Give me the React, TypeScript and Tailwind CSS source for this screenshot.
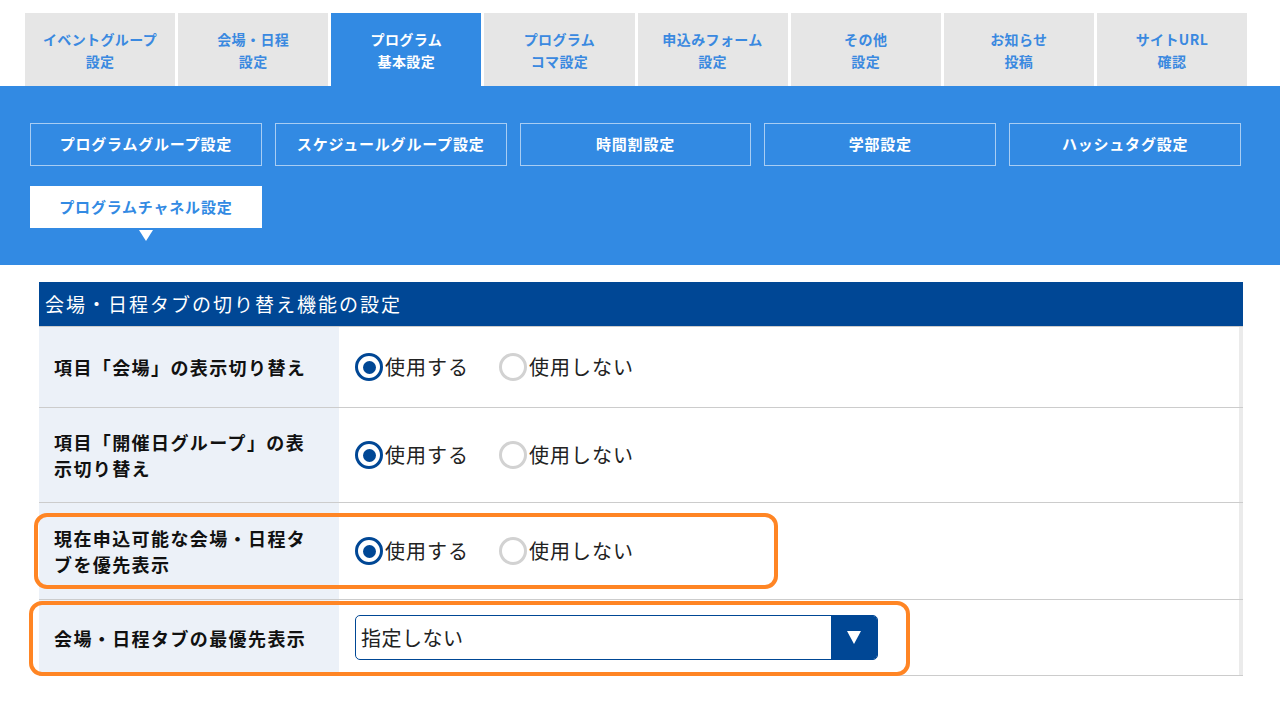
import React from 'react';

const tabs = [
  ['イベントグループ', '設定'],
  ['会場・日程', '設定'],
  ['プログラム', '基本設定'],
  ['プログラム', 'コマ設定'],
  ['申込みフォーム', '設定'],
  ['その他', '設定'],
  ['お知らせ', '投稿'],
  ['サイトURL', '確認'],
];

const subMenus = [
  'プログラムグループ設定',
  'スケジュールグループ設定',
  '時間割設定',
  '学部設定',
  'ハッシュタグ設定',
  'プログラムチャネル設定',
];

function Radio({ checked, label }: { checked: boolean; label: string }) {
  return (
    <label className="flex items-center gap-[2px]">
      <span
        className={`flex h-[28px] w-[28px] items-center justify-center rounded-full border-[3px] bg-white ${
          checked ? 'border-[#004795]' : 'border-[#d2d2d2]'
        }`}
      >
        {checked && <span className="h-[13px] w-[13px] rounded-full bg-[#004795]" />}
      </span>
      <span className="text-[20px] tracking-[1px] text-[#222]">{label}</span>
    </label>
  );
}

function RadioPair() {
  return (
    <div className="flex items-center gap-[30px]">
      <Radio checked label="使用する" />
      <Radio checked={false} label="使用しない" />
    </div>
  );
}

function Row({ label, height, children }: { label: React.ReactNode; height: string; children: React.ReactNode }) {
  return (
    <div className={`flex border-b border-[#cccccc] ${height}`}>
      <div className="flex w-[300px] shrink-0 items-center bg-[#ecf1f8] px-[15px] text-[18px] font-bold leading-[26px] tracking-[1.4px] text-[#111]">
        {label}
      </div>
      <div className="flex flex-1 items-center border-r-[4px] border-[#ebebeb] bg-white pl-[16px]">{children}</div>
    </div>
  );
}

export default function App() {
  return (
    <div className="min-h-[720px] w-full bg-white font-['Noto_Sans_CJK_JP','Noto_Sans',sans-serif]">
      {/* top tabs */}
      <div className="grid grid-cols-8 gap-[3px] pl-[25px] pr-[33px] pt-[13px]">
        {tabs.map((t, i) => (
          <div
            key={i}
            className={`flex h-[73px] flex-col items-center justify-center text-center text-[14px] font-bold leading-[22px] tracking-[0.4px] ${
              i === 2 ? 'bg-[#328ae3] text-white' : 'bg-[#e6e6e6] text-[#3a89e0]'
            }`}
          >
            <span>{t[0]}</span>
            <span>{t[1]}</span>
          </div>
        ))}
      </div>

      {/* sub menu band */}
      <div className="bg-[#328ae3] pb-[37px] pl-[30px] pr-[39px] pt-[37px]">
        <div className="grid grid-cols-5 gap-x-[13px] gap-y-[20px]">
          {subMenus.map((m, i) => {
            const active = i === 5;
            return (
              <div
                key={m}
                className={`relative flex items-center justify-center text-[15px] font-bold tracking-[0.8px] ${
                  active ? 'h-[42px] bg-white text-[#328ae3]' : 'h-[43px] border border-[#a8cdf3] text-white'
                }`}
              >
                {m}
                {active && (
                  <span className="absolute left-1/2 top-full mt-[2px] -translate-x-1/2 border-l-[7px] border-r-[7px] border-t-[11px] border-l-transparent border-r-transparent border-t-white" />
                )}
              </div>
            );
          })}
        </div>
      </div>

      {/* settings section */}
      <div className="relative ml-[39px] mt-[17px] w-[1204px]">
        <div className="flex h-[45px] items-center border-b border-[#cccccc] bg-[#004795] pl-[6px] text-[19px] tracking-[2px] text-white">
          会場・日程タブの切り替え機能の設定
        </div>

        <Row label="項目「会場」の表示切り替え" height="h-[81px]">
          <RadioPair />
        </Row>
        <Row
          label={
            <span>
              項目「開催日グループ」の表
              <br />
              示切り替え
            </span>
          }
          height="h-[95px]"
        >
          <RadioPair />
        </Row>
        <Row
          label={
            <span>
              現在申込可能な会場・日程タ
              <br />
              ブを優先表示
            </span>
          }
          height="h-[97px]"
        >
          <RadioPair />
        </Row>
        <Row label="会場・日程タブの最優先表示" height="h-[76px]">
          <div className="flex h-[45px] w-[523px] overflow-hidden rounded-[5px] border border-[#004795] bg-white">
            <div className="flex flex-1 items-center pl-[5px] text-[20px] tracking-[0.5px] text-[#222]">指定しない</div>
            <div className="flex w-[46px] items-center justify-center bg-[#004795]">
              <span className="border-l-[7px] border-r-[7px] border-t-[13px] border-l-transparent border-r-transparent border-t-white" />
            </div>
          </div>
        </Row>

        {/* annotation highlights */}
        <div className="pointer-events-none absolute left-[-5px] top-[231px] h-[76px] w-[744px] rounded-[13px] border-[4px] border-[#ff8524]" />
        <div className="pointer-events-none absolute left-[-10px] top-[319px] h-[75px] w-[881px] rounded-[13px] border-[4px] border-[#ff8524]" />
      </div>
    </div>
  );
}
